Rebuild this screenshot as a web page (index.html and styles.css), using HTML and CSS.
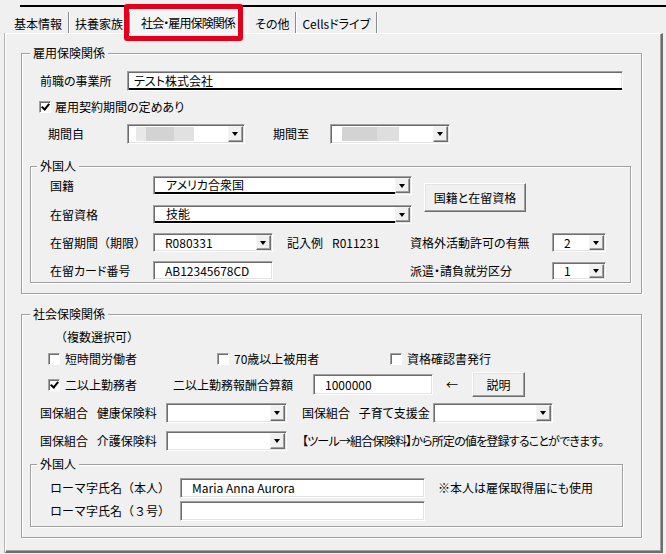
FILE: index.html
```html
<!DOCTYPE html>
<html lang="ja">
<head>
    <meta charset="UTF-8">
    <meta name="viewport" content="width=device-width, initial-scale=1.0">
    <title>社会・雇用保険関係</title>
    <link rel="stylesheet" href="styles.css">
</head>
<body>
<div class="window">
    <div class="topline"></div>
    <div class="tabs">
        <div class="tab">基本情報</div>
        <div class="tab">扶養家族</div>
        <div class="tab active">社会・雇用保険関係</div>
        <div class="tab">その他</div>
        <div class="tab">Cellsドライブ</div>
    </div>
    <div class="mark"></div>

    <div class="page">
        <!-- 雇用保険関係 -->
        <div class="group g-koyo">
            <span class="legend">雇用保険関係</span>

            <div class="row r-prev">
                <span class="lbl" style="width:87px">前職の事業所</span>
                <div class="field" style="width:496px"><span class="val ime pad5">テスト株式会社</span></div>
            </div>

            <div class="row r-contract">
                <span class="check"><span class="cb on"></span>雇用契約期間の定めあり</span>
            </div>

            <div class="row r-period">
                <span class="lbl" style="width:79px">期間自</span>
                <div class="combo" style="width:118px">
                    <span class="val"><span class="blur b1"></span></span>
                    <span class="drop"></span>
                </div>
                <span class="lbl ml28" style="width:57px">期間至</span>
                <div class="combo" style="width:120px">
                    <span class="val"><span class="blur b2"></span></span>
                    <span class="drop"></span>
                </div>
            </div>

            <div class="group sub g-foreign1">
                <span class="legend">外国人</span>
                <div class="pair">
                    <div class="pair-rows">
                        <div class="row h19">
                            <span class="lbl" style="width:103px">国籍</span>
                            <div class="combo" style="width:259px">
                                <span class="val ime">アメリカ合衆国</span>
                                <span class="drop"></span>
                            </div>
                        </div>
                        <div class="row h19 mt10">
                            <span class="lbl" style="width:103px">在留資格</span>
                            <div class="combo" style="width:259px">
                                <span class="val ime">技能</span>
                                <span class="drop"></span>
                            </div>
                        </div>
                    </div>
                    <div class="btn btn-nat">国籍と在留資格</div>
                </div>
                <div class="row h19 mt9">
                    <span class="lbl fw" style="width:103px">在留期間（期限）</span>
                    <div class="combo" style="width:120px">
                        <span class="val">R080331</span>
                        <span class="drop"></span>
                    </div>
                    <span class="example">記入例<span class="ex-val">R011231</span></span>
                    <span class="lbl" style="width:142px">資格外活動許可の有無</span>
                    <div class="combo" style="width:54px">
                        <span class="val">2</span>
                        <span class="drop"></span>
                    </div>
                </div>
                <div class="row h19 mt9">
                    <span class="lbl" style="width:103px">在留カード番号</span>
                    <div class="field" style="width:120px"><span class="val">AB12345678CD</span></div>
                    <span class="lbl ml137" style="width:142px">派遣・請負就労区分</span>
                    <div class="combo" style="width:54px;height:18px">
                        <span class="val">1</span>
                        <span class="drop"></span>
                    </div>
                </div>
            </div>
        </div>

        <!-- 社会保険関係 -->
        <div class="group g-shakai">
            <span class="legend">社会保険関係</span>

            <div class="row r-multi fw">（複数選択可）</div>

            <div class="row r-checks">
                <span class="check" style="width:169px"><span class="cb"></span>短時間労働者</span>
                <span class="check" style="width:173px"><span class="cb"></span>70歳以上被用者</span>
                <span class="check"><span class="cb"></span>資格確認書発行</span>
            </div>

            <div class="row r-multi-work">
                <span class="check" style="width:125px"><span class="cb on"></span>二以上勤務者</span>
                <span class="lbl" style="width:140px">二以上勤務報酬合算額</span>
                <div class="field" style="width:120px;height:21px"><span class="val">1000000</span></div>
                <span class="arrow">←</span>
                <div class="btn btn-help">説明</div>
            </div>

            <div class="row r-kokuho">
                <span class="lbl ws" style="width:126px">国保組合 健康保険料</span>
                <div class="combo" style="width:121px">
                    <span class="val"></span>
                    <span class="drop"></span>
                </div>
                <span class="lbl ws ml15" style="width:131px">国保組合 子育て支援金</span>
                <div class="combo" style="width:120px">
                    <span class="val"></span>
                    <span class="drop"></span>
                </div>
            </div>

            <div class="row r-kaigo">
                <span class="lbl ws" style="width:126px">国保組合 介護保険料</span>
                <div class="combo" style="width:121px">
                    <span class="val"></span>
                    <span class="drop"></span>
                </div>
                <span class="note">【ツール→組合保険料】から所定の値を登録することができます。</span>
            </div>

            <div class="group sub g-foreign2">
                <span class="legend">外国人</span>
                <div class="row">
                    <span class="lbl fw" style="width:130px">ローマ字氏名（本人）</span>
                    <div class="field" style="width:245px"><span class="val">Maria Anna Aurora</span></div>
                    <span class="note2">※本人は雇保取得届にも使用</span>
                </div>
                <div class="row mt3">
                    <span class="lbl fw" style="width:130px">ローマ字氏名（３号）</span>
                    <div class="field" style="width:245px"><span class="val"></span></div>
                </div>
            </div>
        </div>
    </div>
</div>
</body>
</html>
```

FILE: styles.css
```css
body {
    margin: 0;
    background-color: #f0f0f0;
    font-family: "Noto Sans CJK JP", "Noto Sans", sans-serif;
    font-size: 12px;
    line-height: 16px;
    color: #000;
    font-feature-settings: "palt";
}
.window {
    position: relative;
    width: 666px;
    height: 554px;
    overflow: hidden;
}
.topline {
    height: 2px;
    margin: 5px 0 0 20px;
    background-color: #000;
}

/* tabs */
.tabs {
    display: flex;
    align-items: flex-end;
    height: 21px;
    margin-top: 5px;
    padding-left: 8px;
}
.tab {
    height: 21px;
    line-height: 24px;
    padding: 0 6px;
    border-right: 1px solid #8c8c8c;
    box-shadow: 1px 0 0 #fff;
    white-space: nowrap;
    box-sizing: border-box;
}
.tab.active {
    width: 118px;
    height: 24px;
    line-height: 28px;
    margin-left: 1px;
    padding: 0 0 0 10px;
    letter-spacing: -0.9px;
    background-color: #f4f4f4;
    border-right: 0;
    box-shadow: none;
}
.mark {
    position: absolute;
    left: 124px;
    top: 4px;
    width: 119px;
    height: 37px;
    box-sizing: border-box;
    border: 5px solid #e3001b;
    border-radius: 3px;
}

/* page */
.page {
    width: 658px;
    height: 520px;
    margin-left: 5px;
    box-sizing: border-box;
    border-style: solid;
    border-width: 1px 2px 2px 1px;
    border-color: #fff #6d6d6d #6d6d6d #fff;
    box-shadow: -1px 0 0 #b4b4b4, inset -1px -1px 0 #a0a0a0;
    padding: 19px 0 0 15px;
}

/* groups */
.group {
    position: relative;
    box-sizing: border-box;
    border: 1px solid #a0a0a0;
    box-shadow: inset 1px 1px 0 #fff, 1px 1px 0 #fff;
}
.legend {
    position: absolute;
    top: -9px;
    left: 8px;
    padding: 0 3px;
    background-color: #f0f0f0;
}
.group.sub .legend {
    left: 6px;
}
.g-koyo {
    width: 621px;
    padding: 17px 0 10px 0;
}
.g-shakai {
    width: 621px;
    margin-top: 20px;
    padding: 13px 0 10px 0;
}
.g-foreign1 {
    width: 601px;
    margin: 22px 0 0 8px;
    padding: 9px 0 2px 19px;
}
.g-foreign2 {
    width: 593px;
    margin: 13px 0 0 8px;
    padding: 13px 0 5px 19px;
}

/* rows */
.row {
    display: flex;
    align-items: center;
    height: 20px;
    white-space: nowrap;
}
.h19 { height: 19px; }
.mt3 { margin-top: 3px; }
.mt9 { margin-top: 9px; }
.mt10 { margin-top: 10px; }
.ml15 { margin-left: 15px; }
.ml28 { margin-left: 28px; }
.ml137 { margin-left: 137px; }

.r-prev { padding-left: 18px; }
.r-contract { margin-top: 6px; padding-left: 17px; }
.r-period { margin-top: 7px; padding-left: 26px; }
.r-multi { height: 18px; padding-left: 33px; }
.r-checks { margin-top: 3px; padding-left: 26px; }
.r-multi-work { height: 25px; margin-top: 3px; padding-left: 26px; }
.r-kokuho { margin-top: 6px; padding-left: 18px; }
.r-kaigo { margin-top: 8px; padding-left: 18px; }

.lbl {
    flex: none;
}
.fw {
    font-feature-settings: normal;
}
.ws {
    word-spacing: 6px;
}

/* inputs */
.field, .combo {
    flex: none;
    display: flex;
    box-sizing: border-box;
    height: 100%;
    background-color: #fff;
    border: 1px solid;
    border-color: #a0a0a0 #fff #fff #a0a0a0;
    box-shadow: inset 1px 1px 0 #6d6d6d, inset -1px -1px 0 #e3e3e3;
}
.val {
    flex: 1;
    display: flex;
    align-items: center;
    padding-left: 11px;
}
.val.pad5 { padding-left: 5px; }
.val.ime {
    align-items: flex-end;
    line-height: 14px;
    border-bottom: 2px solid #000;
    margin: 1px 0 0 1px;
}
.drop {
    position: relative;
    flex: none;
    width: 15px;
    margin: 1px 1px 1px 0;
    box-sizing: border-box;
    background-color: #f0f0f0;
    border: 1px solid;
    border-color: #f4f4f4 #6d6d6d #6d6d6d #f4f4f4;
    box-shadow: inset -1px -1px 0 #a0a0a0;
}
.drop::after {
    content: "";
    position: absolute;
    left: 3px;
    top: 50%;
    margin-top: -2px;
    border-left: 3.5px solid transparent;
    border-right: 3.5px solid transparent;
    border-top: 4px solid #000;
}
.blur {
    height: 14px;
}
.b1 {
    width: 58px;
    margin-left: -3px;
    background: linear-gradient(90deg, #e8e8e8 0 10px, #d3d3d3 10px 38px, #e1e1e1 38px);
}
.b2 {
    width: 57px;
    background: linear-gradient(90deg, #d3d3d3 0 35px, #dedede 35px);
}

/* checkbox */
.check {
    display: flex;
    align-items: center;
    flex: none;
}
.cb {
    width: 12px;
    height: 12px;
    margin-right: 5px;
    box-sizing: border-box;
    background-color: #fff;
    border: 1px solid;
    border-color: #a0a0a0 #fff #fff #a0a0a0;
    box-shadow: inset 1px 1px 0 #6d6d6d;
    position: relative;
}
.cb.on::after {
    content: "";
    position: absolute;
    left: 3px;
    top: 0px;
    width: 3px;
    height: 6px;
    border: solid #000;
    border-width: 0 2px 2px 0;
    transform: rotate(40deg);
}
.r-contract .cb { margin-right: 4px; }

/* buttons */
.btn {
    flex: none;
    display: flex;
    align-items: center;
    justify-content: center;
    box-sizing: border-box;
    background-color: #f0f0f0;
    border: 1px solid;
    border-color: #fff #6d6d6d #6d6d6d #fff;
    box-shadow: inset -1px -1px 0 #a0a0a0, inset 1px 1px 0 #e3e3e3;
}
.pair {
    display: flex;
}
.btn-nat {
    width: 102px;
    height: 29px;
    margin: 7px 0 0 12px;
}
.btn-help {
    width: 53px;
    height: 25px;
    margin-left: 13px;
}
.arrow {
    margin-left: 13px;
    width: 13px;
}

/* notes */
.example {
    flex: none;
    width: 123px;
    margin-left: 14px;
}
.ex-val {
    margin-left: 9px;
}
.note {
    margin-left: 15px;
    letter-spacing: -0.8px;
}
.note2 {
    margin-left: 13px;
}
```
